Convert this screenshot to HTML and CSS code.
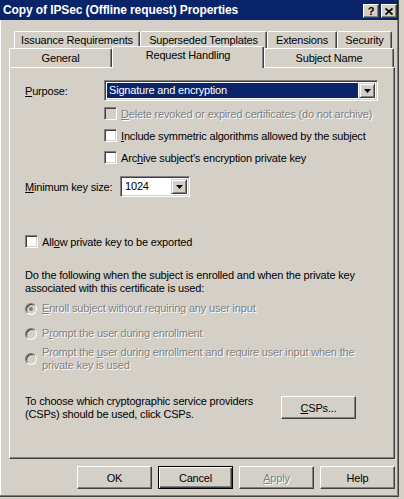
FILE: index.html
```html
<!DOCTYPE html>
<html>
<head>
<meta charset="utf-8">
<title>Properties</title>
<link rel="stylesheet" href="styles.css">
</head>
<body>
<div class="window">
  <div class="titlebar">
    <span class="title">Copy of IPSec (Offline request) Properties</span>
    <div class="caption-btns">
      <span class="cbtn help">?</span>
      <span class="cbtn close"><svg width="8" height="7" viewBox="0 0 8 7"><path d="M0.5 0.5 L7.5 6.5 M7.5 0.5 L0.5 6.5" stroke="#000" stroke-width="1.7" fill="none"/></svg></span>
    </div>
  </div>
  <div class="client">
    <div class="tabs">
      <div class="tabrow r1">
        <div class="tab t-iss">Issuance Requirements</div>
        <div class="tab t-sup">Superseded Templates</div>
        <div class="tab t-ext">Extensions</div>
        <div class="tab t-sec">Security</div>
      </div>
      <div class="tabrow r2">
        <div class="tab t-gen">General</div>
        <div class="tab t-req sel">Request Handling</div>
        <div class="tab t-sub">Subject Name</div>
      </div>
    </div>
    <div class="panel">
      <div class="row purpose-row">
        <span class="lbl lbl-purpose"><u>P</u>urpose:</span>
        <div class="combo combo-purpose">
          <span class="combo-text highlighted">Signature and encryption</span>
          <span class="arrow"><svg width="7" height="4" viewBox="0 0 7 4"><path d="M0 0 H7 L3.5 4 Z" fill="#000"/></svg></span>
        </div>
      </div>
      <div class="checks">
        <div class="chk disabled"><span class="box"></span><span class="txt"><u>D</u>elete revoked or expired certificates (do not archive)</span></div>
        <div class="chk"><span class="box"></span><span class="txt"><u>I</u>nclude symmetric algorithms allowed by the subject</span></div>
        <div class="chk"><span class="box"></span><span class="txt">Arc<u>h</u>ive subject's encryption private key</span></div>
      </div>
      <div class="row keysize-row">
        <span class="lbl lbl-key"><u>M</u>inimum key size:</span>
        <div class="combo combo-key">
          <span class="combo-text">1024</span>
          <span class="arrow"><svg width="7" height="4" viewBox="0 0 7 4"><path d="M0 0 H7 L3.5 4 Z" fill="#000"/></svg></span>
        </div>
      </div>
      <div class="chk allow"><span class="box"></span><span class="txt">All<u>o</u>w private key to be exported</span></div>
      <p class="info">Do the following when the subject is enrolled and when the private key associated with this certificate is used:</p>
      <div class="radios">
        <div class="radio disabled checked r-a"><span class="dot"></span><span class="txt"><u>E</u>nroll subject without requiring any user input</span></div>
        <div class="radio disabled r-b"><span class="dot"></span><span class="txt">P<u>r</u>ompt the user during enrollment</span></div>
        <div class="radio disabled r-c"><span class="dot"></span><span class="txt">Prompt the <u>u</u>ser during enrollment and require user input when the private key is used</span></div>
      </div>
      <div class="csp-row">
        <p class="csp-text">To choose which cryptographic service providers (CSPs) should be used, click CSPs.</p>
        <span class="btn"><u>C</u>SPs...</span>
      </div>
    </div>
    <div class="buttons">
      <span class="btn">OK</span>
      <span class="btn default">Cancel</span>
      <span class="btn disabled"><u>A</u>pply</span>
      <span class="btn">Help</span>
    </div>
  </div>
</div>
</body>
</html>
```
FILE: styles.css
```css
html, body {
  margin: 0;
  padding: 0;
  background: #d4d0c8;
}
body {
  width: 404px;
  height: 499px;
  overflow: hidden;
  font-family: "Liberation Sans", Arial, sans-serif;
  font-size: 11px;
  letter-spacing: -0.18px;
  color: #000;
}
u { text-decoration: underline; text-underline-offset: 1px; }
p { margin: 0; }

.window {
  width: 399px;
  height: 497px;
  box-sizing: border-box;
  border-right: 1px solid #404040;
  border-bottom: 1px solid #404040;
  box-shadow: inset -1px -1px #808080, inset 1px 0 #ffffff;
  display: flex;
  flex-direction: column;
}

.titlebar {
  height: 20px;
  background: #0a246a;
  display: flex;
  align-items: center;
  justify-content: space-between;
  padding: 0 1px 0 3px;
  flex: none;
}
.title {
  color: #fff;
  font-weight: bold;
  font-size: 12px;
  letter-spacing: -0.1px;
}
.caption-btns { display: flex; gap: 0; margin-top: 2px; }
.cbtn {
  width: 16px;
  height: 14px;
  box-sizing: border-box;
  background: #d4d0c8;
  border: 1px solid;
  border-color: #fff #404040 #404040 #fff;
  box-shadow: inset -1px -1px #808080;
  display: flex;
  align-items: center;
  justify-content: center;
  font-weight: bold;
  font-size: 11px;
  line-height: 1;
  letter-spacing: 0;
}
.cbtn.close { margin-left: 2px; }

.client {
  padding: 11px 3px 0 9px;
  flex: 1;
}

.tabs { display: flex; flex-direction: column; }
.tabrow { display: flex; align-items: flex-end; }
.tabrow.r1 { margin-left: 5px; height: 17px; }
.tabrow.r2 { height: 19px; position: relative; z-index: 1; }
.tab {
  box-sizing: border-box;
  height: 100%;
  border-top: 1px solid #fff;
  border-left: 1px solid #fff;
  border-right: 1px solid #404040;
  border-radius: 2px 2px 0 0;
  box-shadow: inset -1px 0 #808080;
  text-align: center;
  line-height: 16px;
  white-space: nowrap;
  background: #d4d0c8;
}
.r2 .tab { line-height: 19px; }
.t-iss { width: 126px; }
.t-sup { width: 127px; }
.t-ext { width: 70px; }
.t-sec { width: 55px; }
.t-gen { width: 103px; }
.t-sub { width: 130px; }
.tab.sel {
  width: 152px;
  height: 22px;
  margin-bottom: -1px;
  line-height: 17px;
}

.panel {
  width: 386px;
  height: 392px;
  box-sizing: border-box;
  border: 1px solid;
  border-color: #fff #404040 #404040 #fff;
  box-shadow: inset -1px -1px #808080;
  padding: 12px 0 0 15px;
  display: flex;
  flex-direction: column;
}

.row { display: flex; align-items: center; }
.lbl-purpose { width: 79px; }
.lbl-key { width: 95px; }

.combo {
  box-sizing: border-box;
  height: 21px;
  background: #fff;
  border: 1px solid;
  border-color: #808080 #fff #fff #808080;
  box-shadow: inset 1px 1px #404040, inset -1px -1px #d4d0c8;
  display: flex;
  align-items: stretch;
  padding: 2px;
}
.combo-purpose { width: 274px; }
.combo-key { width: 70px; }
.combo-text {
  flex: 1;
  padding-left: 2px;
  line-height: 15px;
}
.combo-text.highlighted {
  background: #0a246a;
  color: #fff;
  margin-right: 1px;
}
.arrow {
  width: 16px;
  box-sizing: border-box;
  background: #d4d0c8;
  border: 1px solid;
  border-color: #d4d0c8 #404040 #404040 #d4d0c8;
  box-shadow: inset 1px 1px #fff, inset -1px -1px #808080;
  display: flex;
  align-items: center;
  justify-content: center;
}

.checks {
  margin: 6px 0 0 79px;
  display: flex;
  flex-direction: column;
  gap: 9px;
}
.chk {
  display: flex;
  align-items: center;
  height: 13px;
  white-space: nowrap;
}
.box {
  width: 13px;
  height: 13px;
  box-sizing: border-box;
  flex: none;
  background: #fff;
  border: 1px solid;
  border-color: #808080 #fff #fff #808080;
  box-shadow: inset 1px 1px #404040, inset -1px -1px #d4d0c8;
  margin-right: 4px;
}
.disabled .txt, .btn.disabled {
  color: #808080;
  text-shadow: 1px 1px 0 #fff;
}
.chk.disabled .box { background: #d4d0c8; }

.keysize-row { margin-top: 12px; }
.chk.allow { margin-top: 38px; }

.info {
  margin-top: 21px;
  line-height: 13px;
  width: 345px;
}

.radios {
  margin-top: 7px;
  display: flex;
  flex-direction: column;
}
.radio { display: flex; align-items: center; line-height: 13px; }
.r-b { margin-top: 12px; }
.r-c { margin-top: 6px; }
.r-c .txt { width: 320px; }
.dot {
  width: 12px;
  height: 12px;
  box-sizing: border-box;
  flex: none;
  border-radius: 50%;
  border: 1px solid;
  border-color: #808080 #fff #fff #808080;
  box-shadow: inset 1px 1px #404040, inset -1px -1px #d4d0c8;
  background: #fff;
  margin-right: 5px;
  display: flex;
  align-items: center;
  justify-content: center;
}
.radio.disabled .dot { background: #d4d0c8; }
.radio.checked .dot::after {
  content: "";
  width: 4px;
  height: 4px;
  border-radius: 50%;
  background: #808080;
}

.csp-row {
  margin-top: 23px;
  display: flex;
  align-items: flex-start;
}
.csp-text { width: 256px; line-height: 13px; }

.btn {
  box-sizing: border-box;
  width: 75px;
  height: 23px;
  border: 1px solid;
  border-color: #fff #404040 #404040 #fff;
  box-shadow: inset -1px -1px #808080;
  display: flex;
  align-items: center;
  justify-content: center;
  background: #d4d0c8;
  flex: none;
}
.csp-row .btn { margin-top: 1px; }
.btn.default {
  border-color: #000;
  box-shadow: inset 1px 1px #fff, inset -1px -1px #404040, inset -2px -2px #808080;
}

.buttons {
  width: 386px;
  margin-top: 7px;
  display: flex;
  justify-content: flex-end;
  gap: 6px;
}
```
